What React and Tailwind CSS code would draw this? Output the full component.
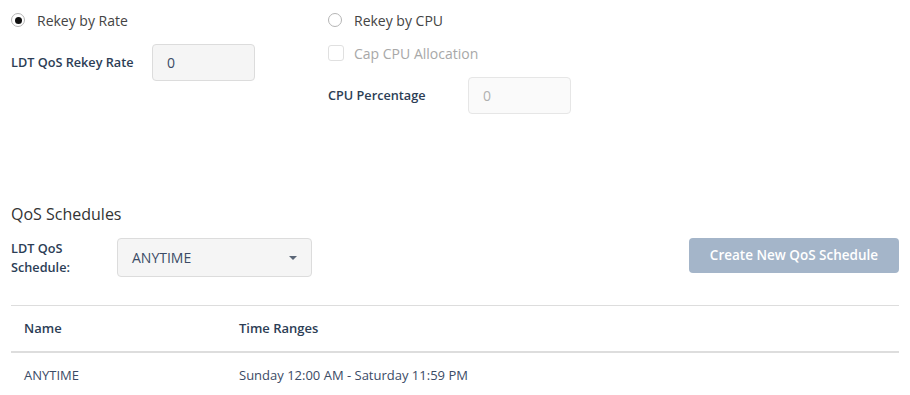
import React from "react";

function Radio({ checked }) {
  return (
    <span className="flex h-[14px] w-[14px] items-center justify-center rounded-full border border-[#b5b5b5] bg-white">
      {checked && <span className="h-[7px] w-[7px] rounded-full bg-[#111]" />}
    </span>
  );
}

export default function App() {
  const font = { fontFamily: '"Open Sans", "Noto Sans", sans-serif' };
  return (
    <div className="h-[395px] w-[910px] overflow-hidden bg-white pl-[11px] text-[#333]" style={font}>
      <div className="flex">
        {/* left column */}
        <div className="w-[317px]">
          <div className="flex h-[40px] items-center gap-[12px]">
            <Radio checked />
            <span className="text-[14px] text-[#444]">Rekey by Rate</span>
          </div>
          <div className="mt-[4px] flex h-[37px] items-center">
            <span className="w-[141px] text-[12.7px] font-semibold text-[#2c3d55]">LDT QoS Rekey Rate</span>
            <div className="flex h-[37px] w-[103px] items-center rounded-[4px] border border-[#dcdcdc] bg-[#f5f5f5] pl-[14px] text-[14px] text-[#3b4b66]">
              0
            </div>
          </div>
        </div>
        {/* right column */}
        <div className="flex-1">
          <div className="flex h-[40px] items-center gap-[12px]">
            <Radio />
            <span className="text-[14px] text-[#444]">Rekey by CPU</span>
          </div>
          <div className="flex h-[26px] items-center gap-[10px]">
            <span className="h-[16px] w-[16px] rounded-[3px] border border-[#e0e0e0] bg-white" />
            <span className="text-[14px] text-[#a8a8a8]">Cap CPU Allocation</span>
          </div>
          <div className="mt-[11px] flex h-[37px] items-center">
            <span className="w-[140px] text-[12.7px] font-semibold text-[#2c3d55]">CPU Percentage</span>
            <div className="flex h-[37px] w-[103px] items-center rounded-[4px] border border-[#e6e6e6] bg-[#fafafa] pl-[14px] text-[14px] text-[#b0b0b0]">
              0
            </div>
          </div>
        </div>
      </div>

      <div className="mt-[89px] w-[888px]">
        <div className="h-[22px] text-[16px] leading-[22px] text-[#333]">QoS Schedules</div>
        <div className="mt-[13px] flex items-start justify-between">
          <div className="flex items-start">
            <div className="w-[106px] pt-[1px] text-[12.7px] font-semibold leading-[19px] text-[#2c3d55]">
              LDT QoS
              <br />
              Schedule:
            </div>
            <div className="flex h-[39px] w-[195px] items-center justify-between rounded-[4px] border border-[#dcdcdc] bg-[#f5f5f5] pl-[14px] pr-[14px] text-[14px] text-[#3b4b66]">
              <span>ANYTIME</span>
              <svg width="8" height="4" viewBox="0 0 8 4">
                <path d="M0 0 L8 0 L4 4 Z" fill="#5b6677" />
              </svg>
            </div>
          </div>
          <button className="h-[35px] w-[210px] rounded-[4px] bg-[#a4b5c9] text-[13.5px] font-semibold text-white">
            Create New QoS Schedule
          </button>
        </div>

        <div className="mt-[28px] border-t border-[#dddddd]">
          <div className="flex h-[45px] items-center text-[13px] font-semibold text-[#2c3d55]">
            <span className="w-[228px] pl-[13px]">Name</span>
            <span>Time Ranges</span>
          </div>
          <div className="border-t-2 border-[#dddddd]">
            <div className="flex h-[46px] items-center text-[13px] text-[#3b4b66]">
              <span className="w-[228px] pl-[13px]">ANYTIME</span>
              <span>Sunday 12:00 AM - Saturday 11:59 PM</span>
            </div>
          </div>
        </div>
      </div>
    </div>
  );
}
